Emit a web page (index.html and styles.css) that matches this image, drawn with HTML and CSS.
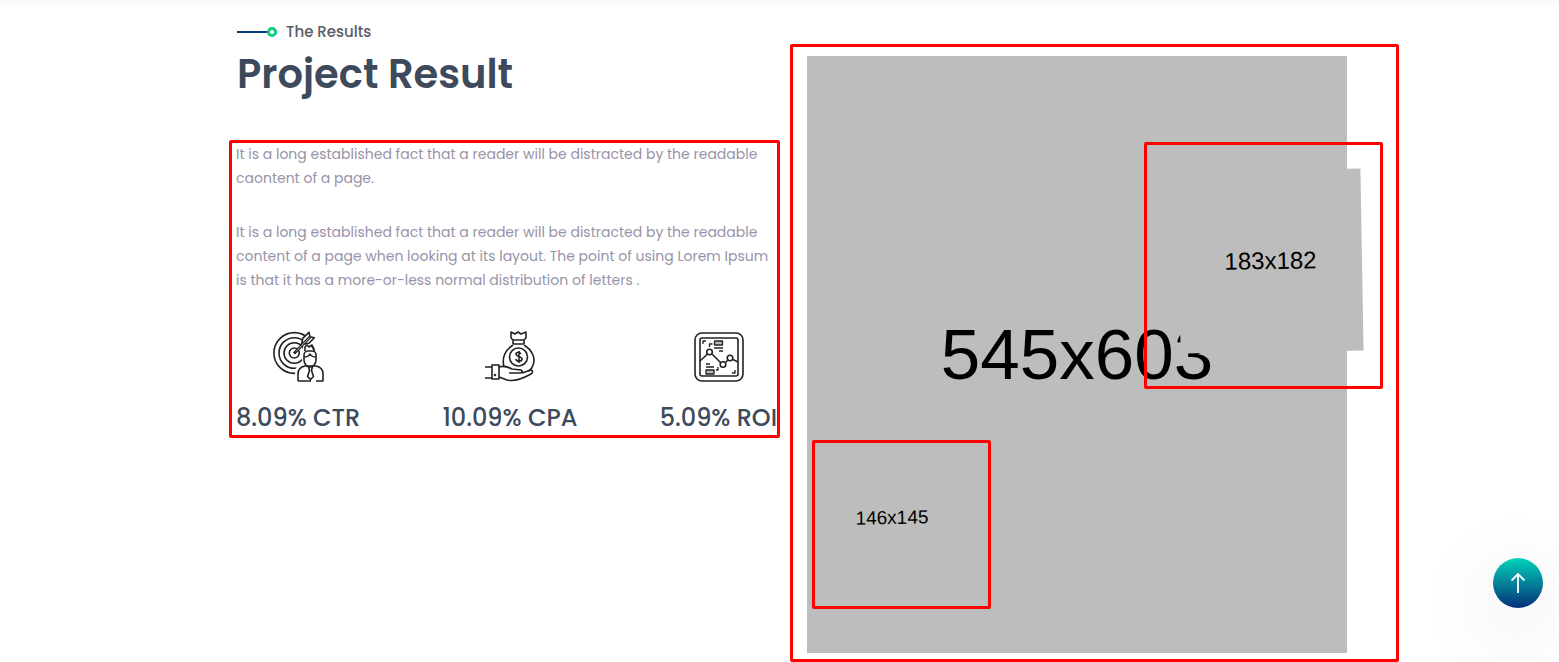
FILE: index.html
```html
<!DOCTYPE html>
<html lang="en">
<head>
<meta charset="utf-8">
<meta name="viewport" content="width=device-width, initial-scale=1">
<title>Project Result</title>
<link rel="stylesheet" href="styles.css">
</head>
<body>
<main class="result">
  <section class="summary">
    <header class="intro">
      <p class="eyebrow">
        <svg class="eyebrow-mark" viewBox="0 0 41 12" aria-hidden="true"><path d="M0 6h31" stroke="#063a7b" stroke-width="2"/><circle cx="35" cy="6" r="3.6" fill="#fff" stroke="#0dce81" stroke-width="3"/></svg>
        The Results
      </p>
      <h1 class="title">Project Result</h1>
    </header>
    <div class="details">
      <p class="copy">It is a long established fact that a reader will be distracted by the readable<br>caontent of a page.</p>
      <p class="copy">It is a long established fact that a reader will be distracted by the readable<br>content of a page when looking at its layout. The point of using Lorem Ipsum<br>is that it has a more-or-less normal distribution of letters .</p>
      <ul class="stats">
        <li class="stat">
          <svg class="icon" viewBox="0 0 52 52" aria-hidden="true">
            <circle cx="22.300" cy="22" r="20.400"/><circle cx="22.300" cy="22" r="15.300"/><circle cx="22.300" cy="22" r="10.300"/><circle cx="22.300" cy="22" r="5"/>
            <path d="M23 51V41c0-5 4-7 8-8l-2-9 2-8 5-5 12-8 3 14-3 15 4 3v16z" fill="#fff" stroke="none"/>
            <path d="M39 14.500c1.500 1.300 2.500 3 3 4.500"/>
            <path d="M29.700 13.500l1-6.200 6.300-6 1 4.400 4.300 1-5.300 5.600-6 1z" fill="#fff"/>
            <path d="M22 22.500L38 6" stroke-width="3"/><path d="M24 20.500L37.500 6.500" stroke="#fff" stroke-width=".7"/>
            <path d="M33 20v-4l2-2 2 2 3-2 2 4v3"/>
            <path d="M32 27v-3c0-2 1.500-4 3.500-4h5c2 0 3.500 2 3.500 4v5c0 4-3 7-6 7s-6-3-6-7v-3c3 0 5-1 6-3 1 2 3 3 6 3"/>
            <path d="M26 50v-7c0-4 2-7 7-8h11c5 1 7 4 7 8v7h-7M26 50h13M36.500 35.500h4l-1 4 2 6-3 3-3-3 2-6z"/>
          </svg>
          <strong class="value">8.09% CTR</strong>
        </li>
        <li class="stat">
          <svg class="icon" viewBox="0 0 52 52" aria-hidden="true">
            <path d="M27 7V1l4 2 3-2 3 2 5-2v6l-2 2H29zM29 9v4M40 9v4M29 13h11M29 14c-9 6-11 14-9 22M40 14c8 5 12 13 9 20-1 3-2 5-5 6"/>
            <circle cx="34.500" cy="26" r="9"/>
            <path d="M37 23c-1-2-5-2-5 0 0 3 6 2 6 5s-6 3-6 0M35 20v12"/>
            <path d="M1 36h7M1 47h7M8 34h7v14H8zM15 36c5-2 9 0 13 2l9 1c2 1 1 3-1 3H25M38 42l9-3c2 0 2 3 0 4-9 5-17 8-24 6l-8-3"/>
            <circle cx="11" cy="44" r=".5"/>
          </svg>
          <strong class="value">10.09% CPA</strong>
        </li>
        <li class="stat">
          <svg class="icon" viewBox="0 0 52 52" aria-hidden="true">
            <rect x="3" y="2" width="48" height="48" rx="7"/><rect x="8" y="7" width="38" height="38" rx="2"/>
            <path d="M8 30l7.500-7M20 23l9 9M33.500 31.500l3-3M41 28.500l5 2.500"/><circle cx="17.500" cy="21" r="2.800"/><circle cx="31" cy="33.500" r="2.800"/><circle cx="38" cy="27" r="2.800"/>
            <path d="M11 13v-3h3M43 39v3h-3M17.500 16v-3h3M26 36v3h-2" stroke-width="1.300"/><path d="M22.500 10h8v4h-8zM22 17h9M27 20h4M14 39h8v4h-8zM14 36h8M14 33h4" fill="#bbb" stroke-width="1.300"/>
          </svg>
          <strong class="value">5.09% ROI</strong>
        </li>
      </ul>
    </div>
  </section>
  <section class="gallery">
    <div class="picture picture-main">545x603</div>
    <div class="picture picture-top">183x182</div>
    <div class="picture picture-bottom">146x145</div>
    <div class="frame frame-top"></div>
    <div class="frame frame-bottom"></div>
  </section>
</main>
<button class="to-top" type="button" aria-label="Back to top">
  <svg class="arrow" viewBox="0 0 16 22" aria-hidden="true"><path d="M8 21V2M1.500 8.500L8 2l6.500 6.500" fill="none" stroke="#fff" stroke-width="1.800"/></svg>
</button>
</body>
</html>
```
FILE: styles.css
```css
* { box-sizing: border-box; }
body {
  margin: 0;
  background: #fff linear-gradient(#f8f8f8, #fff) no-repeat 0 0 / 100% 8px;
  color: #3d4a5c;
  font-family: Poppins, Inter, sans-serif;
}
p, h1, ul { margin: 0; padding: 0; }
.result {
  display: grid;
  grid-template-columns: 551fr 609fr;
  gap: 10px;
  padding: 20px 160px 0 229px;
}
.intro { padding-left: 8px; }
.eyebrow {
  display: flex;
  align-items: center;
  gap: 8px;
  color: #5c5d66;
  font-size: 15px;
  font-weight: 500;
  line-height: 24px;
}
.eyebrow-mark { width: 41px; height: 12px; }
.title { font-size: 40px; font-weight: 600; line-height: 60px; }
.details {
  margin-top: 36px;
  padding-left: 4px;
  border: 3px solid #f00;
  border-radius: 2px;
  overflow: hidden;
}
.copy {
  margin-bottom: 30px;
  color: #9793a9;
  font-size: 14px;
  line-height: 24px;
  white-space: nowrap;
}
.copy:first-child { margin-top: -1px; }
.stats {
  display: flex;
  justify-content: space-between;
  list-style: none;
}
.stat {
  display: flex;
  flex-direction: column;
  align-items: center;
  gap: 18px;
  padding-top: 9px;
}
.icon {
  width: 52px;
  height: 52px;
  fill: none;
  stroke: #222;
  stroke-width: 1.6;
  stroke-linejoin: round;
}
.value { font-size: 24px; font-weight: 500; line-height: 34px; white-space: nowrap; }
.gallery {
  position: relative;
  margin-top: 24px;
  padding: 9px 49px 6px 14px;
  border: 3px solid #f00;
  border-radius: 2px;
}
.picture {
  display: flex;
  align-items: center;
  justify-content: center;
  background: #bdbdbd;
  color: #000;
  font-family: "Liberation Sans", Arial, sans-serif;
}
.picture-main { aspect-ratio: 540 / 597; font-size: 71px; }
.picture-top, .picture-bottom, .frame { position: absolute; }
.picture-top {
  top: 123px;
  right: 34px;
  width: 183px;
  height: 182px;
  font-size: 24px;
  transform: rotate(-1deg);
}
.picture-bottom {
  top: 398px;
  left: 26px;
  width: 146px;
  height: 145px;
  font-size: 19px;
  transform: rotate(-1deg);
}
.frame { border: 3px solid #f00; border-radius: 2px; }
.frame-top { top: 95px; right: 13px; width: 239px; height: 247px; }
.frame-bottom { top: 393px; left: 19px; width: 179px; height: 169px; }
.to-top {
  position: fixed;
  right: 16px;
  bottom: 54px;
  display: flex;
  align-items: center;
  justify-content: center;
  width: 50px;
  height: 50px;
  padding: 0;
  border: 0;
  border-radius: 50%;
  background: linear-gradient(#01d4b8, #06307a);
  box-shadow: 0 20px 80px 10px rgba(0, 0, 0, 0.08);
}
.arrow { width: 16px; height: 22px; }
```
